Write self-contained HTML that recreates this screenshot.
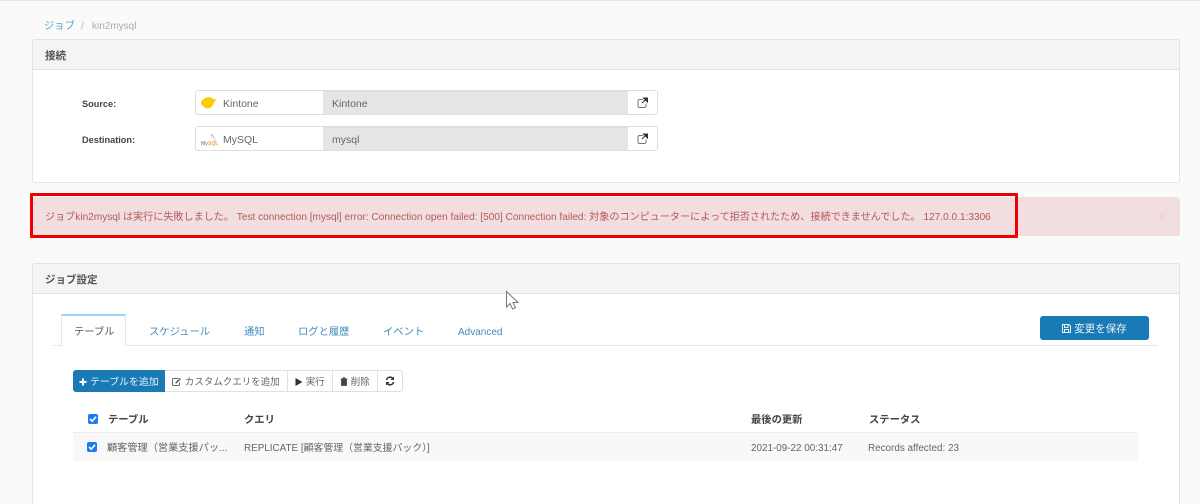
<!DOCTYPE html>
<html lang="ja"><head><meta charset="utf-8"><title>kin2mysql</title>
<style>
html,body{margin:0;padding:0;width:1200px;height:504px;overflow:hidden}
body{background:#fafafa;font-family:"Liberation Sans","Noto Sans CJK JP",sans-serif;font-size:10.5px;color:#666}
#w{position:relative;width:1200px;height:504px;overflow:hidden;filter:blur(.35px)}
.a{position:absolute;white-space:nowrap}
.panel{position:absolute;left:32px;width:1146px;background:#fff;border:1px solid #e4e4e4;border-radius:3px}
.ph{position:absolute;left:0;right:0;top:0;height:29px;background:#f4f4f4;border-bottom:1px solid #e2e2e2;border-radius:3px 3px 0 0}
.ph span{position:absolute;left:12px;top:10px;font-weight:bold;color:#555;font-size:10.5px;line-height:12px}
.box{position:absolute;left:195px;width:461px;height:23px;border:1px solid #dedede;border-radius:3px;background:#fff}
.box .n{position:absolute;left:27px;top:7px;color:#666;line-height:13px}
.box .g{position:absolute;left:127px;top:0;width:305px;height:23px;background:#e5e5e5;color:#666;line-height:25px;padding-left:9px;box-sizing:border-box;border-top:1px solid #ddd}
.lbl{font-weight:bold;color:#444;font-size:9.2px}
.tab{color:#3f8dbb;font-size:10.3px;line-height:13px;top:326px}
.btn{position:absolute;top:370px;height:22px;box-sizing:border-box;background:#fff;border:1px solid #e0e0e0;border-left:0;color:#666;line-height:24px;text-align:center;font-size:9.5px;white-space:nowrap}
.th{font-weight:bold;color:#444;font-size:10.3px;line-height:13px;top:414px}
.td{color:#666;font-size:9.9px;line-height:13px;top:442px}
.cb{position:absolute;width:10px;height:10px;background:#1a7cf0;border-radius:2px}
.cb svg{position:absolute;left:0;top:0}
</style></head><body><div id="w">
<div class="a" style="left:0;top:0;width:1200px;height:1px;background:#e8e8e8"></div>

<div class="a" style="left:44px;top:20px;color:#5a9fc9;font-size:10.3px;line-height:13px">ジョブ</div>
<div class="a" style="left:81px;top:20px;color:#bbb;font-size:10.5px;line-height:13px">/</div>
<div class="a" style="left:92px;top:20px;color:#aaa;font-size:10px;line-height:13px">kin2mysql</div>

<div class="panel" style="top:39px;height:142px"><div class="ph"><span>接続</span></div></div>
<div class="a lbl" style="left:82px;top:98px;line-height:12px">Source:</div>
<div class="a lbl" style="left:82px;top:134px;line-height:12px">Destination:</div>

<div class="box" style="top:90px"><span class="n">Kintone</span><div class="g">Kintone</div>
<svg style="position:absolute;left:433px;top:0" width="27" height="23"><path d="M14 8.500H10.500a1.500 1.500 0 0 0-1.500 1.500v5a1.500 1.500 0 0 0 1.500 1.500h5a1.500 1.500 0 0 0 1.500-1.500v-2.500" fill="none" stroke="#777" stroke-width="1"/><path d="M13 12 16.500 8.500M14.500 7h4v4z" fill="#333" stroke="#333" stroke-width="1"/></svg>
<svg style="position:absolute;left:4px;top:5px" width="18" height="15"><path d="M4.500 2.500C6 1.300 8 1 10 1.300c1.500.2 2.500 1 3 1.700l4 .8c-1.200.5-2.200 1.200-2.700 2-.2 1.500-.8 3-2 3.900-.8 1.600-2.800 2.800-4.800 2.700-1.500-.1-2.700-.8-3.500-1.700C2.500 10.100 1.100 9 1 7.300c-.1-2 1.500-3.700 3.500-4.800z" fill="#fdcb00"/></svg>
</div>
<div class="box" style="top:126px"><span class="n">MySQL</span><div class="g">mysql</div>
<svg style="position:absolute;left:433px;top:0" width="27" height="23"><path d="M14 8.500H10.500a1.500 1.500 0 0 0-1.500 1.500v5a1.500 1.500 0 0 0 1.500 1.500h5a1.500 1.500 0 0 0 1.500-1.500v-2.500" fill="none" stroke="#777" stroke-width="1"/><path d="M13 12 16.500 8.500M14.500 7h4v4z" fill="#333" stroke="#333" stroke-width="1"/></svg>
<svg style="position:absolute;left:4px;top:4px" width="18" height="16"><path d="M11 3c2 1 3.500 4 4.500 7.500M11 3c0 2 1 3 1.500 4" fill="none" stroke="#bbb" stroke-width=".7"/><text x="1" y="14" font-size="5" font-family="Liberation Sans" font-weight="bold" fill="#7d98a8">My</text><text x="8" y="14" font-size="5" font-family="Liberation Sans" font-weight="bold" fill="#eba84a">SQL</text></svg>
</div>

<div class="a" style="left:32px;top:197px;width:1148px;height:39px;background:#f2dede;border-radius:3px"></div>
<div class="a" style="left:30px;top:193px;width:982px;height:39px;border:3px solid #ee0000;border-radius:1px"></div>
<div class="a" style="left:45px;top:211px;color:#b4595a;font-size:10.1px;line-height:13px">ジョブkin2mysql は実行に失敗しました。 Test connection [mysql] error: Connection open failed: [500] Connection failed: 対象のコンピューターによって拒否されたため、接続できませんでした。 127.0.0.1:3306</div>
<svg class="a" style="left:1158px;top:212px" width="9" height="9"><path d="M1 1 8 8M8 1 1 8" stroke="#ebd2d2" stroke-width="1.500"/></svg>

<div class="panel" style="top:263px;height:260px"><div class="ph"><span>ジョブ設定</span></div></div>

<div class="a" style="left:53px;top:345px;width:1105px;height:1px;background:#e6e6e6"></div>
<div class="a" style="left:61px;top:314px;width:65px;height:32px;box-sizing:border-box;background:#fff;border:1px solid #e6e6e6;border-top:2px solid #9bd5f7;border-bottom:0"></div>
<div class="a tab" style="left:74px;color:#555">テーブル</div>
<div class="a tab" style="left:149px">スケジュール</div>
<div class="a tab" style="left:244px">通知</div>
<div class="a tab" style="left:298px">ログと履歴</div>
<div class="a tab" style="left:383px">イベント</div>
<div class="a tab" style="left:458px;font-size:10px">Advanced</div>

<div class="a" style="left:1040px;top:316px;width:109px;height:24px;background:#1a7ab5;border-radius:3px;color:#e8f2f8;text-align:center;line-height:26px;font-size:10.5px">
<svg width="9" height="9" style="vertical-align:-1px"><path d="M.5.5h6.500l1.500 1.500v6.500h-8zM2.500 1v2.500h3.500V1M2.500 8V5.500h4V8" fill="none" stroke="#e8f2f8"/></svg> 変更を保存</div>

<div class="btn" style="left:73px;width:92px;background:#1a7ab5;border:0;border-radius:3px 0 0 3px;color:#e8f2f8;line-height:25px;font-size:9.9px">
<svg width="8" height="8" style="vertical-align:-.5px"><path d="M4 .5v7M.5 4h7" stroke="#fff" stroke-width="2"/></svg> テーブルを追加</div>
<div class="btn" style="left:165px;width:123px">
<svg width="10" height="9" style="vertical-align:-1px"><path d="M6.500 1.500H1.500a1 1 0 0 0-1 1v5a1 1 0 0 0 1 1h5a1 1 0 0 0 1-1V5.500" fill="none" stroke="#666"/><path d="M3.500 6.500V5L8 1l1 1-4.500 4.500z" fill="#666"/></svg> カスタムクエリを追加</div>
<div class="btn" style="left:288px;width:45px">
<svg width="8" height="8" style="vertical-align:-.5px"><path d="M.5 0 7.500 4 .5 8z" fill="#333"/></svg> 実行</div>
<div class="btn" style="left:333px;width:45px">
<svg width="8" height="9" style="vertical-align:-1px"><path d="M.5 2h7M3 2V.8h2V2M1.500 2.500h5v6h-5z" fill="#444" stroke="#444" stroke-width=".8"/></svg> 削除</div>
<div class="btn" style="left:378px;width:25px;border-radius:0 3px 3px 0">
<svg width="10" height="10" style="vertical-align:-1px"><path d="M1.500 4A3.500 3.500 0 0 1 8 3M8.500 6A3.500 3.500 0 0 1 2 7" fill="none" stroke="#333" stroke-width="1.500"/><path d="M9 .5V4H5.500zM1 9.500V6h3.500z" fill="#333"/></svg></div>

<div class="cb" style="left:88px;top:414px"><svg width="10" height="10"><path d="M2 5 4.200 7.200 8 2.800" fill="none" stroke="#fff" stroke-width="1.600"/></svg></div>
<div class="a th" style="left:108px">テーブル</div>
<div class="a th" style="left:244px">クエリ</div>
<div class="a th" style="left:751px">最後の更新</div>
<div class="a th" style="left:869px">ステータス</div>

<div class="a" style="left:73px;top:432px;width:1065px;height:29px;background:#f8f8f8;border-top:1px solid #ececec;box-sizing:border-box"></div>
<div class="cb" style="left:87px;top:442px"><svg width="10" height="10"><path d="M2 5 4.200 7.200 8 2.800" fill="none" stroke="#fff" stroke-width="1.600"/></svg></div>
<div class="a td" style="left:107px;font-size:10.2px">顧客管理（営業支援パッ...</div>
<div class="a td" style="left:244px">REPLICATE [顧客管理（営業支援パック）]</div>
<div class="a td" style="left:751px">2021-09-22 00:31:47</div>
<div class="a td" style="left:868px">Records affected: 23</div>

<svg class="a" style="left:504px;top:290px" width="18" height="22"><path d="M2.500 1.500V17l3.500-3.500 2.500 5.500 3-1.300-2.500-5.200h5z" fill="#fff" stroke="#777" stroke-width="1"/></svg>
</div></body></html>
